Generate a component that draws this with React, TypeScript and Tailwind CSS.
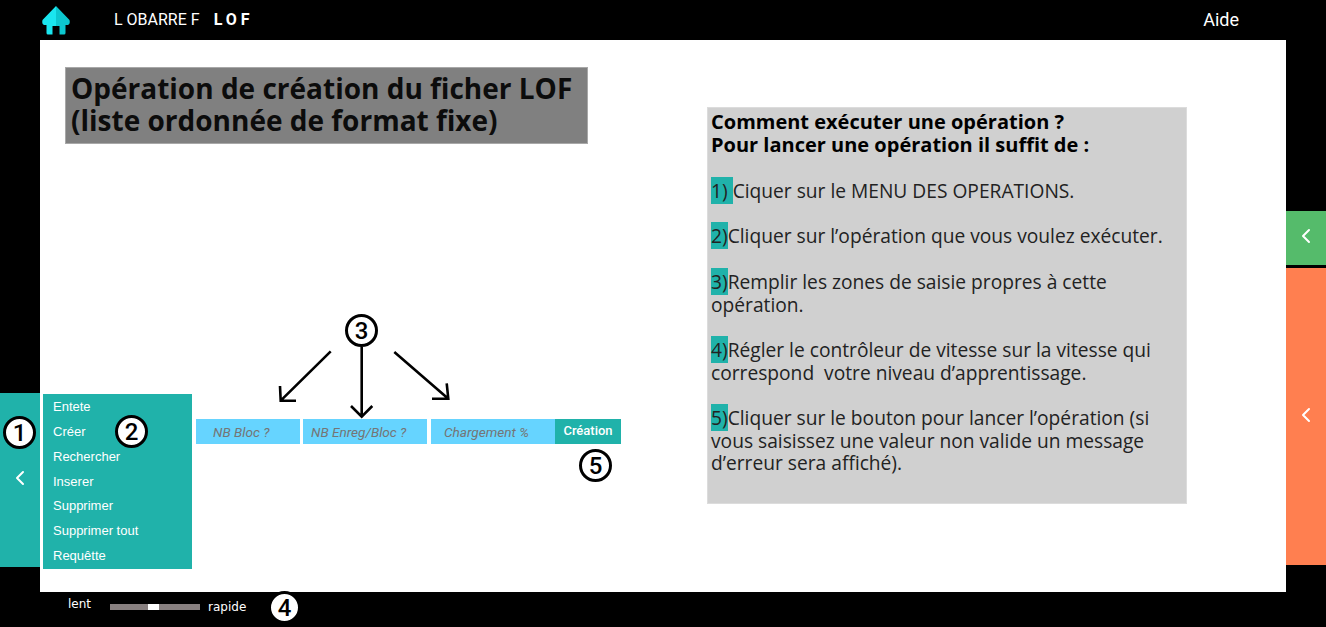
import React from 'react';
import { ChevronLeft } from 'lucide-react';

const menuItems = ['Entete', 'Créer', 'Rechercher', 'Inserer', 'Supprimer', 'Supprimer tout', 'Requêtte'];

const steps = [
  { num: '1) ', lines: ['Ciquer sur le MENU DES OPERATIONS.'] },
  { num: '2)', lines: ['Cliquer sur l’opération que vous voulez exécuter.'] },
  { num: '3)', lines: ['Remplir les zones de saisie propres à cette', 'opération.'] },
  { num: '4)', lines: ['Régler le contrôleur de vitesse sur la vitesse qui', 'correspond  votre niveau d’apprentissage.'] },
  { num: '5)', lines: ['Cliquer sur le bouton pour lancer l’opération (si', 'vous saisissez une valeur non valide un message', 'd’erreur sera affiché).'] },
];

function Badge({ n, className }: { n: number; className: string }) {
  return (
    <div className={`absolute flex h-[33px] w-[33px] items-center justify-center rounded-full border-[3px] border-black bg-white font-['Roboto',sans-serif] text-[24px] font-medium leading-none text-black ${className}`}>
      {n}
    </div>
  );
}

function HomeIcon() {
  return (
    <svg width="30" height="30" viewBox="0 0 30 30" className="block">
      <path d="M15 1 L1.5 15 Q0.5 19 3 20 L5.5 20 L5.5 28 Q5.5 29.5 7 29.5 L11.5 29.5 L11.5 21 L15 21 Z" fill="#1ae6ef" />
      <path d="M15 1 L28.5 15 Q29.5 19 27 20 L24.5 20 L24.5 28 Q24.5 29.5 23 29.5 L18.5 29.5 L18.5 21 L15 21 Z" fill="#0cc7cf" />
    </svg>
  );
}

export default function App() {
  return (
    <div className="relative flex h-[627px] w-full flex-col overflow-hidden bg-black">
      {/* top bar */}
      <div className="flex h-[40px] items-center text-white font-['Roboto',sans-serif]">
        <div className="ml-[41px]"><HomeIcon /></div>
        <span className="ml-[43px] text-[16px]">L OBARRE F</span>
        <span className="ml-[14px] text-[16px] font-bold tracking-[4px]">LOF</span>
        <span className="ml-auto mr-[87px] pb-[2px] text-[18px]">Aide</span>
      </div>

      <div className="flex h-[552px]">
        <div className="w-[40px]">
          <div className="mt-[353px] flex h-[174px] items-center justify-center bg-[#20b2aa] pb-[4px] text-white">
            <ChevronLeft size={24} strokeWidth={2} />
          </div>
        </div>

        <div className="flex flex-1 bg-white">
          <div className="w-[667px]">
            <div className="ml-[25px] mt-[27px] h-[77px] w-[523px] border border-[#a8a8a8] bg-[#808080] pl-[5px] pt-[4px] font-['Open_Sans',sans-serif] text-[28px] font-bold leading-[32px] text-[#0c0c0c]">
              Opération de création du ficher LOF<br />
              (liste ordonnée de format fixe)
            </div>
            <div className="ml-[3px] mt-[250px] flex items-start">
              <ul className="flex h-[175px] w-[149px] flex-col bg-[#20b2aa] pl-[10px] pt-[1px] font-['Liberation_Sans',sans-serif] text-[13px] text-white">
                {menuItems.map((item) => (
                  <li key={item} className="h-[25px] leading-[24px]">{item}</li>
                ))}
              </ul>
              <div className="ml-[4px] mt-[25px] flex h-[25px] font-['Roboto',sans-serif] text-[13.6px] italic">
                <input placeholder="NB Bloc ?" className="h-full w-[104px] bg-[#66d4ff] pl-[17px] pt-[1px] placeholder:text-[#757575]" />
                <input placeholder="NB Enreg/Bloc ?" className="ml-[3px] h-full w-[124px] bg-[#66d4ff] pl-[8px] pt-[1px] placeholder:text-[#757575]" />
                <input placeholder="Chargement %" className="ml-[4px] h-full w-[124px] bg-[#66d4ff] pl-[13px] pt-[1px] placeholder:text-[#757575]" />
                <button className="flex h-full w-[66px] items-start justify-center bg-[#20b2aa] pt-[2px] text-[13px] font-medium not-italic text-white">Création</button>
              </div>
            </div>
          </div>

          <div className="mt-[67px] h-[397px] w-[480px] border border-[#dcdcdc] bg-[#d0d0d0] pl-[3px] pt-[3px] font-['Open_Sans',sans-serif] text-[19.2px] leading-[22.7px] text-[#222222]">
            <p className="text-[20px] font-bold text-black">
              Comment exécuter une opération ?<br />
              Pour lancer une opération il suffit de :
            </p>
            <div className="pt-[1px]">
              {steps.map((step) => (
                <p key={step.num} className="mt-[22.7px] whitespace-pre-wrap">
                  <span className="bg-[#20b2aa]">{step.num}</span>
                  {step.lines.map((line, i) => (
                    <React.Fragment key={i}>
                      {i > 0 && <br />}
                      {line}
                    </React.Fragment>
                  ))}
                </p>
              ))}
            </div>
          </div>
        </div>

        <div className="w-[40px]">
          <div className="mt-[171px] flex h-[54px] items-center justify-center bg-[#55bb6b] pb-[4px] text-white">
            <ChevronLeft size={24} strokeWidth={2} />
          </div>
          <div className="mt-[3px] flex h-[297px] items-center justify-center bg-[#ff7f50] pb-[4px] text-white">
            <ChevronLeft size={24} strokeWidth={2} />
          </div>
        </div>
      </div>

      {/* speed control */}
      <div className="flex h-[35px] items-start font-['DejaVu_Sans',sans-serif] text-[12px] text-white">
        <span className="ml-[68px] mt-[3px]">lent</span>
        <div className="ml-[19px] mt-[12px] h-[6px] w-[90px] bg-[#888080] pl-[38px]">
          <div className="h-full w-[11px] bg-white" />
        </div>
        <span className="ml-[8px] mt-[6px]">rapide</span>
      </div>

      {/* annotations drawn over the screen */}
      <svg width="1326" height="627" className="pointer-events-none absolute left-0 top-0" fill="none" stroke="#000" strokeWidth="2.6">
        <path d="M330.7 351.3 L280.7 400.7 M280 386 L280.7 400.7 L296 400.7" />
        <path d="M361.7 347 L361.7 416.7 M351 406 L361.7 416.7 L372.3 406" />
        <path d="M394.3 352 L448.3 398.7 M446.7 383.3 L448.3 398.7 L432 398.7" />
      </svg>
      <Badge n={1} className="left-[3px] top-[416px]" />
      <Badge n={2} className="left-[115px] top-[415px]" />
      <Badge n={3} className="left-[345px] top-[314px]" />
      <Badge n={4} className="left-[268px] top-[591px]" />
      <Badge n={5} className="left-[579px] top-[449px]" />
    </div>
  );
}
